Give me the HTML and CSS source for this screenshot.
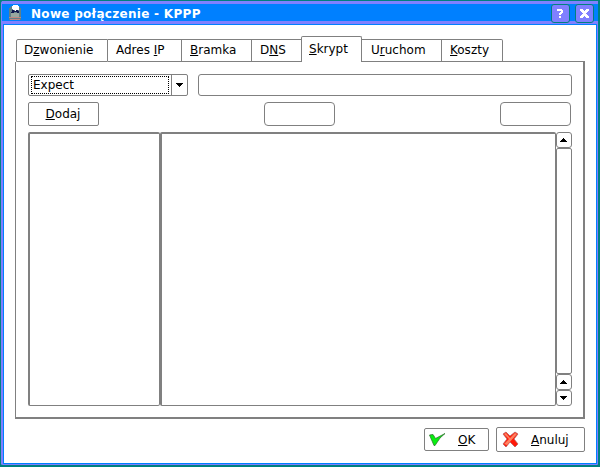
FILE: index.html
```html
<!DOCTYPE html>
<html lang="pl">
<head>
<meta charset="utf-8">
<title>Nowe połączenie - KPPP</title>
<link rel="stylesheet" href="styles.css">
</head>
<body>
<div class="window">
  <header class="titlebar">
    <svg class="app-icon" width="12" height="16" viewBox="0 0 12 16" shape-rendering="crispEdges">
      <path fill="#608088" d="M2 1h8v1h1v1h1v12H0V3h1V2h1z"/>
      <path fill="#fff" d="M4 0h5v1h1v4H8v1H6V5H4V4H3V1h1z"/>
      <path fill="#101850" d="M3 5h2v1h2V5h2v1h1v2H8V7H5v1H2V7h1z"/>
      <path fill="#98a8a0" d="M2 8h8v4H2z"/>
      <path fill="#c08880" d="M0 12h12v1H0zM1 14h10v1H1z"/>
    </svg>
    <h1>Nowe połączenie - KPPP</h1>
    <button class="tool">
      <svg width="19" height="19" viewBox="0 0 19 19" shape-rendering="crispEdges"><path fill="#fff" d="M6 5h5v1h1v3h-1v1h-1v1H8V9h1V8h1V7H6zM8 12h2v2H8z"/></svg>
    </button>
    <button class="tool">
      <svg width="19" height="19" viewBox="0 0 19 19" shape-rendering="crispEdges"><path fill="#fff" d="M5 5h3v1h1v1h1V6h1V5h3v2h-1v1h-1v1h-1v1h1v1h1v1h1v2h-3v-1h-1v-1H9v1H8v1H5v-2h1v-1h1v-1h1V9H7V8H6V7H5z"/></svg>
    </button>
  </header>
  <main class="client">
    <nav class="tabs">
      <div class="tab dzw">D<u>z</u>wonienie</div>
      <div class="tab adr">Adres <u>I</u>P</div>
      <div class="tab bra"><u>B</u>ramka</div>
      <div class="tab dns">D<u>N</u>S</div>
      <div class="tab active"><u>S</u>krypt</div>
      <div class="tab uru">U<u>r</u>uchom</div>
      <div class="tab kos"><u>K</u>oszty</div>
      <div class="rest"></div>
    </nav>
    <section class="panel">
      <div class="row">
        <div class="combo"><span class="value">Expect</span><span class="drop"><svg width="7" height="4" shape-rendering="crispEdges"><path d="M0 0h7v1h-1v1h-1v1h-1v1h-1v-1h-1v-1h-1v-1h-1z"/></svg></span></div>
        <div class="field"></div>
      </div>
      <div class="row actions">
        <button class="btn add"><u>D</u>odaj</button>
        <button class="btn blank"></button>
        <button class="btn blank"></button>
      </div>
      <div class="lists">
        <div class="list types"></div>
        <div class="list values"></div>
        <div class="scrollbar">
          <div class="arrow"><svg width="7" height="4" shape-rendering="crispEdges"><path d="M3 0h1v1h1v1h1v1h1v1h-7v-1h1v-1h1v-1h1z"/></svg></div>
          <div class="track"></div>
          <div class="arrow"><svg width="7" height="4" shape-rendering="crispEdges"><path d="M3 0h1v1h1v1h1v1h1v1h-7v-1h1v-1h1v-1h1z"/></svg></div>
          <div class="arrow"><svg width="7" height="4" shape-rendering="crispEdges"><path d="M0 0h7v1h-1v1h-1v1h-1v1h-1v-1h-1v-1h-1v-1h-1z"/></svg></div>
        </div>
      </div>
    </section>
    <footer class="footer">
      <button class="btn ok">
        <svg width="17" height="13" viewBox="0 0 17 13"><path fill="#08f010" stroke="#307830" stroke-width=".8" d="M.5 2L4 1.500l2.500 4L16 .5 11 5l-5 7.500H5z"/></svg>
        <span><u>O</u>K</span>
      </button>
      <button class="btn cancel">
        <svg width="17" height="17" viewBox="0 0 17 17"><path fill="#ff1808" stroke="#b06060" stroke-width=".7" d="M1 3l3-2 4 4 5-4 3 2-4 5 4 5-3 3-5-5-4 5-3-3 4-5z"/><path fill="#ff8060" d="M2 3l2-1 4 5 5-5 2 1-10 11-3-1 5-5z"/></svg>
        <span><u>A</u>nuluj</span>
      </button>
    </footer>
  </main>
</div>
</body>
</html>
```
FILE: styles.css
```css
* { box-sizing: border-box; }
body { margin: 0; background: #008080; font: 12px/14px "DejaVu Sans", sans-serif; color: #000; }
svg { display: block; flex: none; }
u { text-decoration: underline; text-underline-offset: 1px; text-decoration-thickness: 1px; text-decoration-skip-ink: none; }
button { font: inherit; color: inherit; padding: 0; margin: 0; }
.window { width: 600px; height: 467px; border: 1px solid #008080; border-right-width: 2px; border-bottom-width: 2px; border-radius: 3px; background: #8080ff; padding: 0 1px 1px 2px; }
.titlebar { height: 23px; display: flex; align-items: flex-start; margin: 0 -1px; padding: 3px 4px 0 7px; background: linear-gradient(#8080ff 3px, #0080ff 3px, #0080ff 20px, #8080ff 20px); }
.titlebar h1 { margin: 3px auto 0 10px; font-size: 12px; line-height: 14px; color: #fff; letter-spacing: 0.3px; }
.app-icon { margin-top: 1px; }
.tool { width: 19px; height: 19px; border: 1px solid #008080; border-radius: 3px; background: #8080ff; margin-left: 5px; }
.tool svg { margin: -1px; }
.client { height: 440px; border: 1px solid #0080ff; background: #fff; padding: 11px 11px 0 11px; }
.tabs { display: flex; align-items: flex-end; height: 26px; padding-left: 1px; }
.tab { height: 23px; border: 1px solid #808080; border-left: 0; padding: 3px 0 0 8px; }
.dzw { width: 92px; border-left: 1px solid #808080; border-top-left-radius: 2px; padding-left: 7px; }
.adr { width: 74px; }
.bra { width: 70px; }
.dns { width: 49px; border-right: 0; }
.active { width: 61px; height: 26px; border-left: 1px solid #808080; border-bottom: 0; border-radius: 2px 2px 0 0; padding: 5px 0 0 7px; }
.uru { width: 80px; padding-left: 9px; }
.kos { width: 61px; border-top-right-radius: 2px; }
.rest { flex: 1; height: 1px; background: #808080; }
.panel { height: 357px; border: 1px solid #808080; border-top: 0; border-right-width: 2px; border-bottom-width: 2px; padding: 12px 11px 0 12px; }
.row { display: flex; justify-content: space-between; }
.combo { display: flex; width: 160px; height: 22px; border: 1px solid #808080; border-radius: 2px; }
.value { width: 138px; height: 18px; margin: 1px 2px; border: 1px dotted #000; padding: 1px 0 0 1px; }
.drop { flex: 1; border-left: 1px solid #808080; display: flex; align-items: center; padding-left: 4px; }
.field { width: 374px; height: 22px; border: 1px solid #808080; border-radius: 3px; }
.actions { margin-top: 6px; padding-right: 1px; }
.btn { width: 71px; height: 24px; border: 1px solid #808080; border-radius: 2px; background: #fff; }
.add { padding-right: 1px; }
.blank { border-radius: 4px; }
.lists { display: flex; height: 274px; margin-top: 6px; }
.list { border: 1px solid #808080; border-top-width: 2px; border-left-width: 2px; border-radius: 2px; }
.types { width: 132px; }
.values { flex: 1; }
.scrollbar { width: 16px; display: flex; flex-direction: column; }
.arrow { height: 16px; border: 1px solid #808080; border-radius: 3px; display: flex; align-items: center; padding-left: 3px; }
.track { flex: 1; border: 1px solid #808080; border-radius: 2px; }
.footer { display: flex; justify-content: flex-end; align-items: center; gap: 7px; padding-top: 8px; }
.footer .btn { display: flex; align-items: center; }
.ok { width: 65px; height: 23px; padding-left: 4px; }
.footer .cancel { width: 89px; height: 25px; padding-left: 5px; }
.ok span { margin-left: 12px; }
.cancel span { margin-left: 12px; }
```
